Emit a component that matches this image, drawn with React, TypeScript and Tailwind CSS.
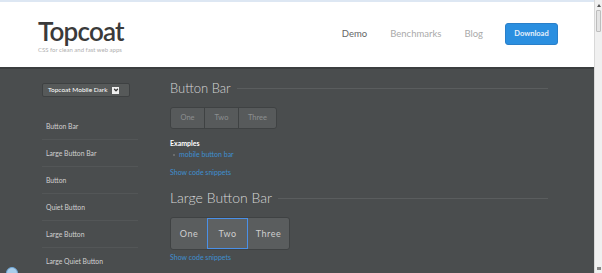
import { ChevronDown } from 'lucide-react'

const sideItems = ['Button Bar', 'Large Button Bar', 'Button', 'Quiet Button', 'Large Button', 'Large Quiet Button']

function SectionTitle({ title, size }: { title: string; size: string }) {
  return (
    <div className="flex items-center gap-[6px]">
      <h2 className={`${size} font-light text-[#d6d6d6] leading-none whitespace-nowrap`}>{title}</h2>
      <div className="h-px flex-1 bg-[#5a5d5e]" />
    </div>
  )
}

export default function App() {
  return (
    <div className="flex h-[273px] w-[602px] overflow-hidden bg-white font-['Lato',sans-serif]">
      <div className="relative flex min-w-0 flex-1 flex-col">
        <div className="h-[2px] shrink-0 bg-[#dde7f3]" />
        <header className="flex h-[67px] shrink-0 items-start border-b-2 border-[#3b3e3f] bg-white">
          <div className="ml-[38px] mt-[16px] flex flex-col">
            <h1 className="text-[26px] font-semibold leading-[26px] tracking-[-0.8px] text-[#3a3a3a]">Topcoat</h1>
            <p className="mt-[3px] text-[6px] leading-none text-[#b0b0b0]">CSS for clean and fast web apps</p>
          </div>
          <nav className="ml-auto mr-[36px] mt-[21px] flex items-center text-[9.5px]">
            <a className="text-[#666]">Demo</a>
            <a className="ml-[23px] text-[#aaa]">Benchmarks</a>
            <a className="ml-[23px] text-[#aaa]">Blog</a>
            <button className="ml-[22px] h-[22px] w-[53px] rounded-[3px] border border-[#2a7fc9] bg-[#2b8fe0] text-[7.5px] font-bold text-[#e8f1fb]">
              Download
            </button>
          </nav>
        </header>

        <div className="flex min-h-0 flex-1 overflow-hidden bg-[#4a4d4e]">
          <aside className="ml-[42px] w-[96px] shrink-0 pt-[14px]">
            <div className="flex h-[14px] w-[88px] items-center justify-between rounded-[2px] border border-[#3e4142] bg-[#565959] pl-[5px] pr-[10px] text-[6.5px] text-white">
              <span className="whitespace-nowrap">Topcoat Mobile Dark</span>
              <span className="flex h-[7px] w-[7px] items-center justify-center bg-[#eee]">
                <ChevronDown className="h-[6px] w-[6px] text-[#333]" strokeWidth={5} />
              </span>
            </div>
            <ul className="mt-[16px]">
              {sideItems.map((item, i) => (
                <li
                  key={item}
                  className={`flex h-[27px] items-center pl-[4px] text-[6.8px] text-[#d0d0d0] ${i < sideItems.length - 1 ? 'border-b border-[#535657]' : ''}`}
                >
                  {item}
                </li>
              ))}
            </ul>
          </aside>

          <main className="ml-[32px] w-[378px] shrink-0 pt-[13px]">
            <SectionTitle title="Button Bar" size="text-[13px]" />
            <div className="mt-[12px] flex h-[22px] w-[107px] overflow-hidden rounded-[3px] border border-[#3f4243] bg-[#575a5b] text-[7.5px] text-[#8c8f90]">
              <span className="flex w-[34px] items-center justify-center border-r border-[#3f4243]">One</span>
              <span className="flex w-[34px] items-center justify-center border-r border-[#3f4243]">Two</span>
              <span className="flex flex-1 items-center justify-center">Three</span>
            </div>
            <p className="mt-[11px] text-[7px] font-bold leading-none text-white">Examples</p>
            <p className="mt-[4px] flex items-center text-[7px] leading-none text-[#3f8fd0]">
              <span className="ml-[3px] mr-[4px] h-[2px] w-[2px] rounded-full bg-[#777]" />
              mobile button bar
            </p>
            <p className="mt-[11px] text-[7px] leading-none text-[#3f8fd0]">Show code snippets</p>

            <div className="mt-[15px]">
              <SectionTitle title="Large Button Bar" size="text-[14px]" />
            </div>
            <div className="mt-[12px] flex h-[33px] w-[120px] rounded-[3px] border border-[#3f4243] bg-[#5a5d5e] text-[9px] tracking-[0.5px] text-[#cfcfcf]">
              <span className="flex w-[36px] items-center justify-center">One</span>
              <span className="flex w-[41px] items-center justify-center border border-[#4a90e8] bg-[#5e6162]">Two</span>
              <span className="flex flex-1 items-center justify-center">Three</span>
            </div>
            <p className="mt-[4px] text-[7px] leading-none text-[#3f8fd0]">Show code snippets</p>
          </main>
        </div>

        <div className="absolute left-[6px] top-[267px] h-[12px] w-[12px] rounded-full border border-[#6fa7d8] bg-[#a9cdea]" />
      </div>

      <div className="flex w-[8px] shrink-0 flex-col border-l border-[#d8d8d8] bg-[#f0f0f0]">
        <div className="mx-auto mt-[4px] h-0 w-0 border-x-[2px] border-b-[3px] border-x-transparent border-b-[#555]" />
        <div className="mx-[1px] mt-[3px] h-[22px] rounded-[1px] border border-[#bdbdbd] bg-[#e4e4e4]" />
        <div className="mx-auto mb-[3px] mt-auto h-[3px] w-[4px] bg-[#888]" />
      </div>
    </div>
  )
}
